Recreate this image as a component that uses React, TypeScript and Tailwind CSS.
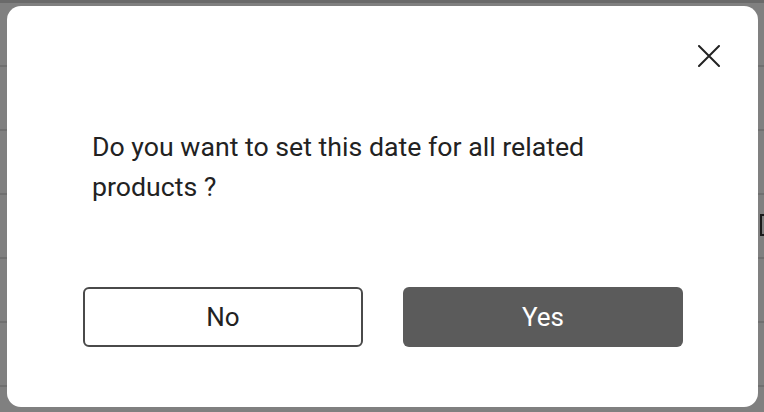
import React from "react";

export default function App() {
  const rows = [0, 1, 2, 3, 4, 5];
  return (
    <div className="relative w-[764px] h-[412px] overflow-hidden bg-[#808080]" style={{ fontFamily: "Roboto, 'Liberation Sans', sans-serif" }}>
      {/* background page under the overlay */}
      <div className="flex flex-col">
        <div className="h-[3px] bg-[#6a6a6a]" />
        <div className="h-[62px]" />
        {rows.map((r) => (
          <div key={r} className="h-[64px] border-t-2 border-[#707070] relative">
            {r === 2 && (
              <div className="absolute right-[-8px] top-[19px] w-[12px] h-[22px] border-2 border-[#1a1a1a]" />
            )}
          </div>
        ))}
      </div>
      <div className="absolute left-[30px] top-[404px] text-[24px] text-[#5a5a5a]">Product Name</div>

      {/* modal */}
      <div className="absolute left-[7px] top-[6px] w-[751px] h-[401px] rounded-[14px] bg-white flex flex-col pt-[39px]">
        <div className="flex justify-end pr-[38px] h-[22px]">
          <svg width="22" height="22" viewBox="0 0 22 22" className="text-[#222]">
            <path d="M1 1 L21 21 M21 1 L1 21" stroke="currentColor" strokeWidth="2" strokeLinecap="round" />
          </svg>
        </div>
        <p className="mt-[60px] pl-[85px] w-[640px] text-[26.7px] leading-[40px] text-[#222]">
          Do you want to set this date for all related products ?
        </p>
        <div className="mt-[80px] flex justify-center gap-[40px] pl-[1px]">
          <button className="w-[280px] h-[60px] rounded-[6px] border-2 border-[#4a4a4a] bg-white text-[26px] text-[#222]">
            No
          </button>
          <button className="w-[280px] h-[60px] rounded-[6px] bg-[#5b5b5b] text-[26px] text-white">
            Yes
          </button>
        </div>
      </div>
    </div>
  );
}
